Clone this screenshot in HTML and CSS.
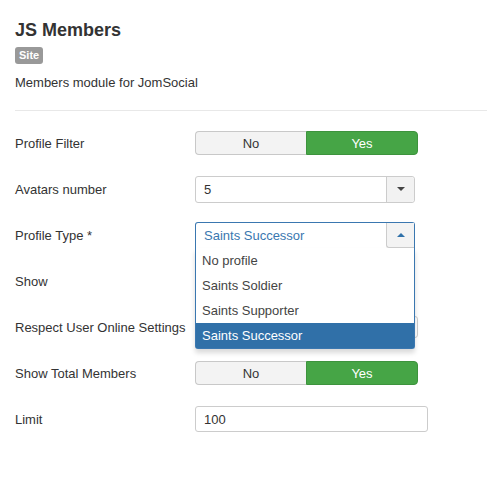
FILE: index.html
```html
<!DOCTYPE html>
<html>
<head>
<meta charset="utf-8">
<link rel="stylesheet" href="styles.css">
</head>
<body>
<div class="page">
  <h1 class="title">JS Members</h1>
  <span class="badge">Site</span>
  <p class="desc">Members module for JomSocial</p>
  <hr class="sep">
  <div class="form">
    <div class="row">
      <label class="lbl">Profile Filter</label>
      <div class="toggle"><span class="opt no">No</span><span class="opt yes">Yes</span></div>
    </div>
    <div class="row">
      <label class="lbl">Avatars number</label>
      <div class="select"><span class="val">5</span><span class="arrow"><span class="tri down"></span></span></div>
    </div>
    <div class="row">
      <label class="lbl">Profile Type *</label>
      <div class="chosen">
        <div class="chosen-head"><span class="val">Saints Successor</span><span class="arrow open"><span class="tri up"></span></span></div>
        <ul class="chosen-list">
          <li>No profile</li>
          <li>Saints Soldier</li>
          <li>Saints Supporter</li>
          <li class="hl">Saints Successor</li>
        </ul>
      </div>
    </div>
    <div class="row">
      <label class="lbl">Show</label>
      <div class="box hidden-box"></div>
    </div>
    <div class="row">
      <label class="lbl">Respect User Online Settings</label>
      <div class="box wide-box"></div>
    </div>
    <div class="row">
      <label class="lbl">Show Total Members</label>
      <div class="toggle"><span class="opt no">No</span><span class="opt yes">Yes</span></div>
    </div>
    <div class="row">
      <label class="lbl">Limit</label>
      <div class="input">100</div>
    </div>
  </div>
</div>
</body>
</html>
```
FILE: styles.css
```css
* { box-sizing: border-box; }
html, body { margin: 0; padding: 0; background: #fff; }
body {
  font-family: "Liberation Sans", Arial, sans-serif;
  font-size: 13px;
  color: #333;
}
.page { padding: 19px 0 0 15px; }
.title {
  margin: 0;
  font-size: 18px;
  line-height: 22px;
  font-weight: bold;
  color: #333;
}
.badge {
  display: inline-block;
  margin-top: 6px;
  background: #999;
  color: #fff;
  font-size: 11px;
  font-weight: bold;
  line-height: 17px;
  height: 17px;
  padding: 0 4px;
  border-radius: 3px;
}
.desc {
  margin: 10px 0 0;
  line-height: 18px;
}
.sep {
  margin: 18px 0 0;
  border: 0;
  border-top: 1px solid #e8e8e8;
  height: 0;
}
.form { margin-top: 9px; }
.row {
  display: flex;
  align-items: center;
  height: 46px;
}
.lbl { width: 180px; flex: none; }
.toggle {
  display: flex;
  width: 223px;
  height: 24px;
}
.opt {
  flex: 1;
  display: flex;
  align-items: center;
  justify-content: center;
  font-size: 13px;
}
.opt.no {
  background: #f3f3f3;
  border: 1px solid #c8c8c8;
  border-right: 0;
  border-radius: 4px 0 0 4px;
  color: #333;
}
.opt.yes {
  background: #46a546;
  border: 1px solid #3d933d;
  border-radius: 0 4px 4px 0;
  color: #fff;
}
.box {
  height: 22px;
  border: 1px solid #ccc;
  border-radius: 3px;
  background: #fff;
}
.hidden-box { width: 220px; }
.wide-box { width: 223px; }
.select {
  display: flex;
  width: 220px;
  height: 27px;
  border: 1px solid #ccc;
  border-radius: 3px;
  background: #fff;
  align-items: stretch;
}
.val {
  flex: 1;
  display: flex;
  align-items: center;
  padding-left: 8px;
}
.arrow {
  width: 28px;
  display: flex;
  align-items: center;
  justify-content: center;
  background: #f2f2f2;
  border-left: 1px solid #ccc;
  border-radius: 0 3px 3px 0;
}
.tri {
  width: 0;
  height: 0;
  border-left: 4px solid transparent;
  border-right: 4px solid transparent;
}
.tri.down { border-top: 4px solid #444; }
.tri.up { border-bottom: 4px solid #3071a9; }
.chosen {
  position: relative;
  width: 220px;
  height: 26px;
  z-index: 5;
}
.chosen-head {
  display: flex;
  height: 26px;
  border: 1px solid #3a77b0;
  border-bottom: 0;
  border-radius: 3px 3px 0 0;
  background: #fff;
  color: #3a77b0;
}
.arrow.open {
  border-left: 1px solid #ccc;
  border-bottom: 1px solid #ccc;
  border-radius: 0 0 0 3px;
  background: #f3f3f3;
}
.chosen-list {
  position: absolute;
  left: 0;
  top: 26px;
  width: 220px;
  margin: 0;
  padding: 0;
  list-style: none;
  background: #fff;
  border: 1px solid #3a77b0;
  border-top: 0;
  border-radius: 0 0 3px 3px;
  box-shadow: 0 4px 5px rgba(0,0,0,0.15);
}
.chosen-list li {
  height: 25px;
  line-height: 25px;
  padding-left: 6px;
  color: #444;
}
.chosen-list li.hl {
  background: #3070a8;
  color: #fff;
}
.input {
  width: 233px;
  height: 26px;
  border: 1px solid #ccc;
  border-radius: 3px;
  display: flex;
  align-items: center;
  padding-left: 8px;
}
```
